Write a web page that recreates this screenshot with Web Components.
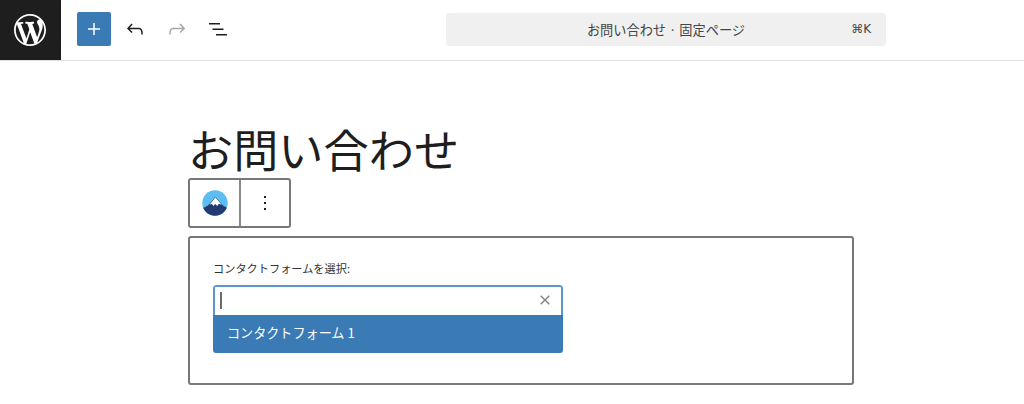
<!DOCTYPE html>
<html lang="ja">
<head>
<meta charset="utf-8">
<title>お問い合わせ</title>
<style>
html, body { margin: 0; height: 404px; overflow: hidden; background: #fff; }
body { font-family: "Noto Sans CJK JP", "Liberation Sans", sans-serif; color: #1e1e1e; }
</style>
</head>
<body>
<editor-header></editor-header>
<editor-canvas>
  <post-title>お問い合わせ</post-title>
  <block-toolbar></block-toolbar>
  <form-selector label="コンタクトフォームを選択:" option="コンタクトフォーム 1"></form-selector>
</editor-canvas>

<script>
class EditorHeader extends HTMLElement {
    constructor() {
        super();
        const root = this.attachShadow({mode: 'open'});
        root.innerHTML = `
            <style>
            :host { display: flex; align-items: center; box-sizing: content-box; height: 58px; padding-bottom: 2px; border-bottom: 1px solid #e0e0e0; background: #fff; }
            .logo { width: 60px; height: 60px; padding-right: 1px; margin-bottom: -2px; background: #1e1e1e; display: flex; align-items: center; justify-content: center; flex: none; }
            .inserter { width: 34px; height: 34px; margin-left: 16px; background: #3a7ab5; border-radius: 2px; display: flex; align-items: center; justify-content: center; flex: none; }
            .tools { display: flex; align-items: center; margin-left: 6px; gap: 5.5px; flex: none; }
            .tools svg { display: block; }
            .tool { width: 36px; height: 36px; display: flex; align-items: center; justify-content: center; }
            .command { width: 440px; height: 33px; margin-left: 210px; background: #f0f0f0; border-radius: 4px; position: relative; display: flex; align-items: center; justify-content: center; font-size: 13.2px; color: #444; flex: none; }
            .shortcut { position: absolute; right: 15px; top: 8px; font: 12px/17px "DejaVu Sans", sans-serif; color: #444; }
            </style>
            <div class="logo">
                <svg width="32" height="32" viewBox="0 0 20 20" fill="#fff"><path d="M20 10c0-5.51-4.49-10-10-10C4.48 0 0 4.49 0 10c0 5.52 4.48 10 10 10 5.51 0 10-4.48 10-10zM7.78 15.37L4.37 6.22c.55-.02 1.17-.08 1.17-.08.5-.06.44-1.13-.06-1.11 0 0-1.45.11-2.37.11-.18 0-.37 0-.58-.01C4.12 2.69 6.87 1.11 10 1.11c2.33 0 4.45.87 6.05 2.34-.68-.11-1.65.39-1.65 1.58 0 .74.45 1.36.9 2.1.35.61.55 1.36.55 2.46 0 1.49-1.4 5-1.4 5l-3.03-8.37c.54-.02.82-.17.82-.17.5-.05.44-1.25-.06-1.22 0 0-1.44.12-2.38.12-.87 0-2.33-.12-2.33-.12-.5-.03-.56 1.2-.06 1.22l.92.08 1.26 3.41zM17.41 10c.24-.64.74-1.87.43-4.25.7 1.29 1.05 2.71 1.05 4.25 0 3.29-1.73 6.24-4.4 7.78.97-2.59 1.94-5.2 2.92-7.78zM6.1 18.09C3.12 16.65 1.11 13.53 1.11 10c0-1.3.23-2.48.72-3.59C3.25 10.3 4.67 14.2 6.1 18.09zm4.03-6.63l2.58 6.98c-.86.29-1.76.45-2.71.45-.79 0-1.57-.11-2.29-.33.81-2.38 1.62-4.74 2.42-7.1z"/></svg>
            </div>
            <div class="inserter">
                <svg width="24" height="24" viewBox="0 0 24 24" fill="#fff"><path d="M11.25 6h1.5v5.25H18v1.5h-5.25V18h-1.5v-5.25H6v-1.5h5.25z"/></svg>
            </div>
            <div class="tools">
                <div class="tool"><svg width="24" height="24" viewBox="0 0 24 24" fill="#1e1e1e"><path d="M18.3 11.7c-.6-.6-1.4-.9-2.3-.9H6.7l2.9-3.3-1.1-1-4.5 5L8.5 16l1-1-2.7-2.7H16c.5 0 .9.2 1.3.5 1 1 1 3.4 1 4.5v.3h1.5v-.2c0-1.5 0-4.3-1.5-5.7z"/></svg></div>
                <div class="tool"><svg width="24" height="24" viewBox="0 0 24 24" fill="#a7a7a7"><path d="M15.6 6.5l-1.1 1 2.9 3.3H8c-.9 0-1.7.3-2.3.9-1.4 1.5-1.4 4.2-1.4 5.6v.2h1.5v-.3c0-1.1 0-3.5 1-4.5.3-.3.7-.5 1.3-.5h9.2L14.5 15l1.1 1.1 4.6-4.6-4.6-5z"/></svg></div>
                <div class="tool"><svg width="24" height="24" viewBox="0 0 24 24" fill="#1e1e1e"><path d="M3 6h11v1.5H3V6zm3.5 5.5h11V13h-11v-1.5zM21 17H10v1.5h11V17z"/></svg></div>
            </div>
            <div class="command">
                <span>お問い合わせ · 固定ページ</span>
                <span class="shortcut">⌘K</span>
            </div>
        `;
    }
}

class EditorCanvas extends HTMLElement {
    constructor() {
        super();
        const root = this.attachShadow({mode: 'open'});
        root.innerHTML = `
            <style>
            :host { display: flex; flex-direction: column; align-items: flex-start; padding: 59px 0 0 188px; }
            </style>
            <slot></slot>
        `;
    }
}

class PostTitle extends HTMLElement {
    constructor() {
        super();
        const root = this.attachShadow({mode: 'open'});
        root.innerHTML = `
            <style>
            :host { display: block; height: 58px; font-size: 45.2px; line-height: 58px; color: #1e1e1e; white-space: nowrap; }
            </style>
            <slot></slot>
        `;
    }
}

class BlockToolbar extends HTMLElement {
    constructor() {
        super();
        const root = this.attachShadow({mode: 'open'});
        root.innerHTML = `
            <style>
            :host { display: flex; box-sizing: border-box; width: 103px; height: 50px; border: 2px solid #787878; border-radius: 3px; background: #fff; }
            .cell { display: flex; align-items: center; justify-content: center; box-sizing: border-box; }
            .brand { width: 51px; border-right: 2px solid #8a8a8a; padding-left: 1px; }
            .more { flex: 1; }
            </style>
            <div class="cell brand">
                <svg width="26" height="26" viewBox="0 0 26 26">
                    <defs><clipPath id="c"><circle cx="13" cy="13" r="12.7"/></clipPath></defs>
                    <g clip-path="url(#c)">
                        <rect width="26" height="26" fill="#5dbcf0"/>
                        <path d="M-1 19 L6 15.5 L13.4 7 L21 15.5 L27 19 V27 H-1z" fill="#233a73"/>
                        <path d="M7.6 14.6 L13.4 7.4 L19.7 14.8 L16.9 13.8 L15.2 15.9 L13.4 14 L11.4 15.9 L10 14z" fill="#fff"/>
                    </g>
                </svg>
            </div>
            <div class="cell more">
                <svg width="24" height="24" viewBox="0 0 24 24" fill="#1e1e1e"><path d="M13 19h-2v-2h2v2zm0-6h-2v-2h2v2zm0-6h-2V5h2v2z"/></svg>
            </div>
        `;
    }
}

class FormSelector extends HTMLElement {
    constructor() {
        super();
        const root = this.attachShadow({mode: 'open'});
        root.innerHTML = `
            <style>
            :host { display: block; box-sizing: border-box; width: 666px; height: 149px; margin-top: 8px; padding: 22px 23px 0; border: 2px solid #787878; border-radius: 3px; background: #fff; }
            .label { height: 17px; font-size: 11.2px; line-height: 17px; color: #333; margin-bottom: 8px; }
            .combo { width: 350px; border-radius: 3px; overflow: hidden; }
            .field { box-sizing: border-box; height: 30px; display: flex; align-items: center; justify-content: space-between; padding: 0 4px 0 5px; background: #fff; border: 2px solid #5d96ca; border-bottom: 0; border-radius: 3px 3px 0 0; }
            .caret { width: 2px; height: 17px; margin-top: -2px; background: #6a6a6a; }
            .field svg { display: block; margin-top: -2px; }
            .option { box-sizing: border-box; height: 38px; padding: 0 14px; background: #3a7ab5; color: #fff; font-size: 13.1px; line-height: 35px; }
            </style>
            <div class="label"></div>
            <div class="combo">
                <div class="field">
                    <span class="caret"></span>
                    <svg width="24" height="24" viewBox="0 0 24 24" fill="#858585"><path d="M12 13.06l3.71 3.71 1.06-1.06L13.06 12l3.71-3.71-1.06-1.06L12 10.94 8.29 7.23 7.23 8.29 10.94 12l-3.71 3.71 1.06 1.06z"/></svg>
                </div>
                <div class="option"></div>
            </div>
        `;
        root.querySelector('.label').textContent = this.getAttribute('label');
        root.querySelector('.option').textContent = this.getAttribute('option');
    }
}

customElements.define('editor-header', EditorHeader);
customElements.define('editor-canvas', EditorCanvas);
customElements.define('post-title', PostTitle);
customElements.define('block-toolbar', BlockToolbar);
customElements.define('form-selector', FormSelector);
</script>
</body>
</html>
